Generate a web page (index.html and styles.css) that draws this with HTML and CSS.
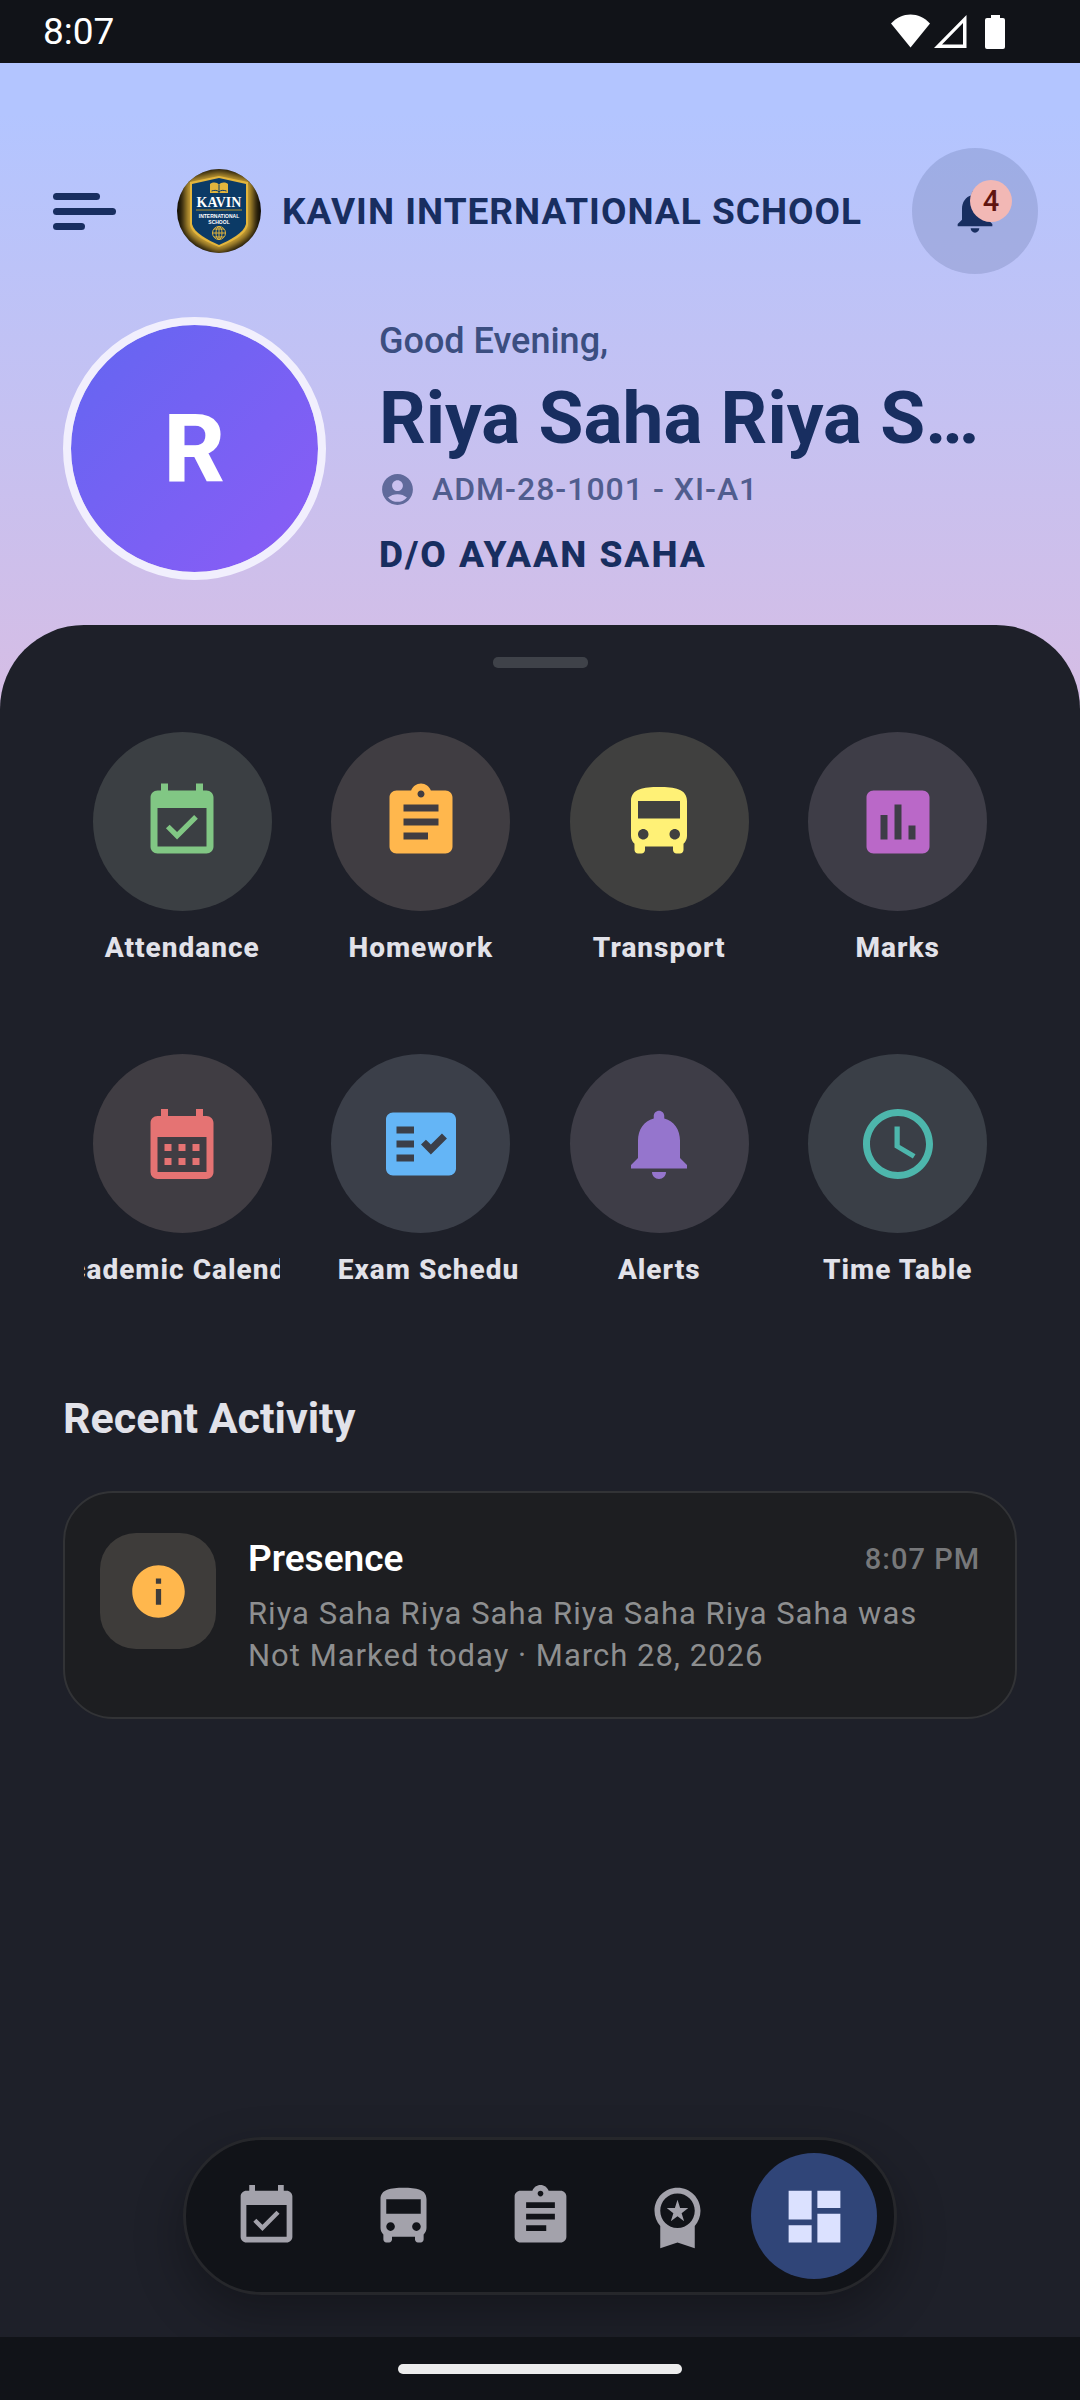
FILE: index.html
```html
<!DOCTYPE html>
<html lang="en">
<head>
    <meta charset="UTF-8">
    <meta name="viewport" content="width=device-width, initial-scale=1.0">
    <title>Kavin International School</title>
    <link rel="stylesheet" href="styles.css">
</head>
<body>

    <!-- shared icon shapes -->
    <svg class="icon-defs" aria-hidden="true">
        <symbol id="i-attendance" viewBox="0 0 24 24"><path d="M16.53 11.06L15.47 10l-4.88 4.88-2.12-2.12-1.06 1.06L10.59 17l5.94-5.94zM19 3h-1V1h-2v2H8V1H6v2H5c-1.11 0-1.99.9-1.99 2L3 19c0 1.1.89 2 2 2h14c1.1 0 2-.9 2-2V5c0-1.1-.9-2-2-2zm0 16H5V8h14v11z"/></symbol>
        <symbol id="i-homework" viewBox="0 0 24 24"><path d="M19 3h-4.18C14.4 1.84 13.3 1 12 1c-1.3 0-2.4.84-2.82 2H5c-1.1 0-2 .9-2 2v14c0 1.1.9 2 2 2h14c1.1 0 2-.9 2-2V5c0-1.1-.9-2-2-2zm-7 0c.55 0 1 .45 1 1s-.45 1-1 1-1-.45-1-1 .45-1 1-1zm2 14H7v-2h7v2zm3-4H7v-2h10v2zm0-4H7V7h10v2z"/></symbol>
        <symbol id="i-bus" viewBox="0 0 24 24"><path d="M4 16c0 .88.39 1.67 1 2.22V20c0 .55.45 1 1 1h1c.55 0 1-.45 1-1v-1h8v1c0 .55.45 1 1 1h1c.55 0 1-.45 1-1v-1.78c.61-.55 1-1.34 1-2.22V6c0-3.5-3.58-4-8-4s-8 .5-8 4v10zm3.5 1c-.83 0-1.5-.67-1.5-1.5S6.67 14 7.5 14s1.5.67 1.5 1.5S8.33 17 7.5 17zm9 0c-.83 0-1.5-.67-1.5-1.5s.67-1.5 1.5-1.5 1.5.67 1.5 1.5-.67 1.5-1.5 1.5zm1.5-6H6V6h12v5z"/></symbol>
        <symbol id="i-marks" viewBox="0 0 24 24"><path d="M19 3H5c-1.1 0-2 .9-2 2v14c0 1.1.9 2 2 2h14c1.1 0 2-.9 2-2V5c0-1.1-.9-2-2-2zM9 17H7v-7h2v7zm4 0h-2V7h2v10zm4 0h-2v-4h2v4z"/></symbol>
        <symbol id="i-calendar" viewBox="0 0 24 24"><path d="M19 4h-1V2h-2v2H8V2H6v2H5c-1.11 0-1.99.9-1.99 2L3 20a2 2 0 0 0 2 2h14c1.1 0 2-.9 2-2V6c0-1.1-.9-2-2-2zm0 16H5V10h14v10zM9 14H7v-2h2v2zm4 0h-2v-2h2v2zm4 0h-2v-2h2v2zm-8 4H7v-2h2v2zm4 0h-2v-2h2v2zm4 0h-2v-2h2v2z"/></symbol>
        <symbol id="i-exam" viewBox="0 0 24 24"><path d="M20 3H4c-1.1 0-2 .9-2 2v14c0 1.1.9 2 2 2h16c1.1 0 2-.9 2-2V5c0-1.1-.9-2-2-2zM10 17H5v-2h5v2zm0-4H5v-2h5v2zm0-4H5V7h5v2zm4.82 6L12 12.16l1.41-1.41 1.41 1.42L17.99 9l1.42 1.42L14.82 15z"/></symbol>
        <symbol id="i-bell" viewBox="0 0 24 24"><path d="M12 22c1.1 0 2-.9 2-2h-4c0 1.1.89 2 2 2zm6-6v-5c0-3.07-1.64-5.64-4.5-6.32V4c0-.83-.67-1.5-1.5-1.5s-1.5.67-1.5 1.5v.68C7.63 5.36 6 7.92 6 11v5l-2 2v1h16v-1l-2-2z"/></symbol>
        <symbol id="i-clock" viewBox="0 0 24 24"><path d="M11.99 2C6.47 2 2 6.48 2 12s4.47 10 9.99 10C17.52 22 22 17.52 22 12S17.52 2 11.99 2zM12 20c-4.42 0-8-3.58-8-8s3.58-8 8-8 8 3.58 8 8-3.58 8-8 8zm.5-13H11v6l5.25 3.15.75-1.23-4.5-2.67z"/></symbol>
        <symbol id="i-award" viewBox="0 0 24 24"><path d="M9.68 13.69L12 11.93l2.31 1.76-.88-2.85L15.75 9h-2.84L12 6.19 11.09 9H8.25l2.31 1.84-.88 2.85zM20 10c0-4.42-3.58-8-8-8s-8 3.58-8 8c0 2.03.76 3.87 2 5.28V23l6-2 6 2v-7.72c1.24-1.41 2-3.25 2-5.28zm-8-6c3.31 0 6 2.69 6 6s-2.69 6-6 6-6-2.69-6-6 2.69-6 6-6z"/></symbol>
        <symbol id="i-dashboard" viewBox="0 0 24 24"><path d="M3 13h8V3H3v10zm0 8h8v-6H3v6zm10 0h8V11h-8v10zm0-18v6h8V3h-8z"/></symbol>
        <symbol id="i-info" viewBox="0 0 24 24"><path d="M12 2C6.48 2 2 6.48 2 12s4.48 10 10 10 10-4.48 10-10S17.52 2 12 2zm1 15h-2v-6h2v6zm0-8h-2V7h2v2z"/></symbol>
        <symbol id="i-account" viewBox="0 0 24 24"><path d="M12 2C6.48 2 2 6.48 2 12s4.48 10 10 10 10-4.48 10-10S17.52 2 12 2zm0 4c1.93 0 3.5 1.57 3.5 3.5S13.93 13 12 13s-3.5-1.57-3.5-3.5S10.07 6 12 6zm0 14c-2.03 0-4.43-.82-6.14-2.88C7.55 15.8 9.68 15 12 15s4.45.8 6.14 2.12C16.43 19.18 14.03 20 12 20z"/></symbol>
    </svg>

    <div class="status-bar">
        <span class="status-time">8:07</span>
        <svg class="status-icons" width="116" height="36" viewBox="0 0 116 36" aria-hidden="true">
            <path d="M0 9.5C11-2.5 28-2.5 39 9.5L19.5 33.5z"/>
            <path d="M43 34L75.5 1V34zM51 30.5H72V9z" fill-rule="evenodd"/>
            <path d="M100 1h9v3h3a2 2 0 0 1 2 2v27a2 2 0 0 1-2 2H96a2 2 0 0 1-2-2V6a2 2 0 0 1 2-2h4z"/>
        </svg>
    </div>

    <div class="screen">
        <header class="topbar">
            <button class="menu-btn" aria-label="Menu">
                <span class="menu-line menu-line-mid"></span>
                <span class="menu-line"></span>
                <span class="menu-line menu-line-short"></span>
            </button>
            <div class="brand">
                <svg class="logo" viewBox="0 0 84 84" aria-hidden="true">
                    <defs>
                        <clipPath id="logoClip"><circle cx="42" cy="42" r="42"/></clipPath>
                        <filter id="glow" x="-30%" y="-30%" width="160%" height="160%"><feGaussianBlur stdDeviation="4"/></filter>
                    </defs>
                    <g clip-path="url(#logoClip)">
                        <rect width="84" height="84" fill="#0d0a04"/>
                        <path d="M42 3L76 10V58C74 70 58 77 42 83C26 77 10 70 8 58V10z" fill="#d3a838" filter="url(#glow)"/>
                        <path d="M42 7L71 13V56C69 66 54 73 42 78C30 73 15 66 13 56V13z" fill="#e3b53c"/>
                        <path d="M42 9L69 15V55C67 64 53 71 42 76C31 71 17 64 15 55V15z" fill="#0b3a66"/>
                        <path d="M33 15c3-2 7-2 9 1 2-3 6-3 9-1v9H33z" fill="#e3b53c"/>
                        <path d="M42 16v8M34.5 22c3-1 6-1 7.5 1 1.5-2 4.5-2 7.5-1" stroke="#0b3a66" fill="none"/>
                        <text x="42" y="38" class="logo-name">KAVIN</text>
                        <path d="M19 41h46" stroke="#b8932f"/>
                        <text x="42" y="49" class="logo-sub">INTERNATIONAL</text>
                        <text x="42" y="55" class="logo-sub">SCHOOL</text>
                        <g fill="none" stroke="#e3b53c">
                            <circle cx="42" cy="64" r="6.5"/>
                            <ellipse cx="42" cy="64" rx="3" ry="6.5"/>
                            <path d="M42 57.5v13M35.5 64h13M37 60h10M37 68h10"/>
                        </g>
                    </g>
                </svg>
                <span class="school-name">KAVIN INTERNATIONAL SCHOOL</span>
            </div>
            <button class="bell-btn" aria-label="Notifications">
                <svg class="bell-icon"><use href="#i-bell"/></svg>
                <span class="badge">4</span>
            </button>
        </header>

        <section class="profile">
            <div class="avatar">R</div>
            <div class="profile-info">
                <p class="greeting">Good Evening,</p>
                <h1 class="student-name">Riya Saha Riya Saha Riya Saha Riya Saha</h1>
                <p class="admission"><svg class="account-icon"><use href="#i-account"/></svg>ADM-28-1001 - XI-A1</p>
                <p class="parent">D/O AYAAN SAHA</p>
            </div>
        </section>

        <main class="sheet">
            <div class="handle"></div>

            <nav class="shortcuts">
                <a href="#" class="shortcut green"><span class="circle"><svg><use href="#i-attendance"/></svg></span><span class="label">Attendance</span></a>
                <a href="#" class="shortcut orange"><span class="circle"><svg><use href="#i-homework"/></svg></span><span class="label">Homework</span></a>
                <a href="#" class="shortcut yellow"><span class="circle"><svg><use href="#i-bus"/></svg></span><span class="label">Transport</span></a>
                <a href="#" class="shortcut pink"><span class="circle"><svg><use href="#i-marks"/></svg></span><span class="label">Marks</span></a>
                <a href="#" class="shortcut red"><span class="circle"><svg><use href="#i-calendar"/></svg></span><span class="label">Academic Calendar</span></a>
                <a href="#" class="shortcut blue"><span class="circle"><svg><use href="#i-exam"/></svg></span><span class="label label-start">Exam Schedule</span></a>
                <a href="#" class="shortcut purple"><span class="circle"><svg><use href="#i-bell"/></svg></span><span class="label">Alerts</span></a>
                <a href="#" class="shortcut teal"><span class="circle"><svg><use href="#i-clock"/></svg></span><span class="label">Time Table</span></a>
            </nav>

            <h2 class="section-title">Recent Activity</h2>

            <article class="activity-card">
                <div class="activity-icon"><svg><use href="#i-info"/></svg></div>
                <div class="activity-body">
                    <div class="activity-head">
                        <h3>Presence</h3>
                        <time>8:07 PM</time>
                    </div>
                    <p>Riya Saha Riya Saha Riya Saha Riya Saha was Not Marked today · March 28, 2026</p>
                </div>
            </article>

            <nav class="bottom-nav">
                <a href="#" class="nav-item" aria-label="Attendance"><svg><use href="#i-attendance"/></svg></a>
                <a href="#" class="nav-item" aria-label="Transport"><svg><use href="#i-bus"/></svg></a>
                <a href="#" class="nav-item" aria-label="Homework"><svg><use href="#i-homework"/></svg></a>
                <a href="#" class="nav-item" aria-label="Results"><svg><use href="#i-award"/></svg></a>
                <a href="#" class="nav-item active" aria-label="Dashboard"><svg><use href="#i-dashboard"/></svg></a>
            </nav>
        </main>
    </div>

    <div class="gesture-bar"><span class="gesture-pill"></span></div>

</body>
</html>
```
FILE: styles.css
```css
* {
    box-sizing: border-box;
}

body {
    background-color: #111318;
    font-family: Roboto, "Liberation Sans", sans-serif;
    color: #e2e2e9;
    margin: 0;
    min-height: 100vh;
    display: flex;
    flex-direction: column;
}

h1, h2, h3, p {
    margin: 0;
}

button {
    border: none;
    padding: 0;
    font-family: inherit;
    cursor: pointer;
}

a {
    text-decoration: none;
    color: inherit;
}

svg {
    fill: currentColor;
    flex-shrink: 0;
}

.icon-defs {
    display: none;
}

/* status bar */
.status-bar {
    height: 63px;
    padding: 0 73px 0 43px;
    display: flex;
    justify-content: space-between;
    align-items: center;
    color: white;
}

.status-time {
    font-size: 37px;
}

/* header */
.screen {
    flex: 1;
    display: flex;
    flex-direction: column;
    background: linear-gradient(#b3c5ff 50px, #e0bbdd 810px);
    color: #182e60;
}

.topbar {
    display: flex;
    align-items: center;
    gap: 61px;
    padding: 85px 42px 0 53px;
}

.menu-btn {
    background: none;
    width: 63px;
    display: flex;
    flex-direction: column;
    gap: 8px;
}

.menu-line {
    width: 100%;
    height: 7px;
    border-radius: 4px;
    background-color: #182e60;
}

.menu-line-mid {
    width: 75%;
}

.menu-line-short {
    width: 50%;
}

.brand {
    flex: 1;
    display: flex;
    align-items: center;
    gap: 21px;
    min-width: 0;
}

.logo {
    width: 84px;
    height: 84px;
}

.logo-name {
    font: bold 14px "Liberation Serif", serif;
    fill: white;
    text-anchor: middle;
}

.logo-sub {
    font: bold 5px "Liberation Sans", sans-serif;
    fill: white;
    text-anchor: middle;
}

.school-name {
    font-size: 37px;
    font-weight: 700;
    letter-spacing: 1px;
    white-space: nowrap;
}

.bell-btn {
    position: relative;
    width: 126px;
    height: 126px;
    border-radius: 50%;
    background-color: rgba(24, 46, 96, 0.15);
    color: #182e60;
    display: flex;
    align-items: center;
    justify-content: center;
    flex-shrink: 0;
    margin-left: -20px;
}

.bell-icon {
    width: 52px;
    height: 52px;
}

.badge {
    position: absolute;
    top: 32px;
    right: 26px;
    width: 42px;
    height: 42px;
    border-radius: 50%;
    background-color: #f2b8b5;
    color: #601410;
    font-size: 29px;
    font-weight: 500;
    line-height: 42px;
    text-align: center;
}

/* profile */
.profile {
    display: flex;
    align-items: center;
    gap: 53px;
    padding: 41px 84px 44px 63px;
}

.avatar {
    width: 263px;
    height: 263px;
    border: 8px solid #f1effd;
    border-radius: 50%;
    background: linear-gradient(135deg, #6366f1, #8b5cf6) padding-box;
    color: white;
    font-size: 95px;
    font-weight: 800;
    display: flex;
    align-items: center;
    justify-content: center;
    flex-shrink: 0;
}

.profile-info {
    flex: 1;
    min-width: 0;
}

.greeting {
    font-size: 36px;
    font-weight: 500;
    line-height: 52px;
    color: #3b4e80;
}

.student-name {
    font-size: 73px;
    font-weight: 700;
    line-height: 94px;
    margin: 4px 0 3px;
    white-space: nowrap;
    overflow: hidden;
    text-overflow: ellipsis;
}

.admission {
    display: flex;
    align-items: center;
    gap: 16px;
    font-size: 32px;
    font-weight: 500;
    line-height: 42px;
    letter-spacing: 1px;
    color: #505d8e;
}

.account-icon {
    width: 37px;
    height: 37px;
    color: #606a9b;
}

.parent {
    font-size: 37px;
    font-weight: 800;
    line-height: 52px;
    letter-spacing: 2px;
    margin-top: 19px;
}

/* sheet */
.sheet {
    flex: 1;
    display: flex;
    flex-direction: column;
    padding: 32px 63px 42px;
    border-radius: 84px 84px 0 0;
    background-color: #1e2029;
    color: #e2e2e9;
}

.handle {
    width: 95px;
    height: 11px;
    border-radius: 5px;
    background-color: #3f4249;
    align-self: center;
}

.shortcuts {
    display: grid;
    grid-template-columns: repeat(4, 1fr);
    row-gap: 85px;
    margin-top: 64px;
}

.shortcut {
    display: flex;
    flex-direction: column;
    align-items: center;
    gap: 16px;
    min-width: 0;
}

.circle {
    width: 179px;
    height: 179px;
    border-radius: 50%;
    display: flex;
    align-items: center;
    justify-content: center;
}

.circle svg {
    width: 84px;
    height: 84px;
}

.green .circle { background-color: #3b3f43; color: #81c784; }
.orange .circle { background-color: #403d42; color: #ffb74d; }
.yellow .circle { background-color: #40403f; color: #fff176; }
.pink .circle { background-color: #3e3d47; color: #ba68c8; }
.red .circle { background-color: #403d43; color: #e57373; }
.blue .circle { background-color: #3b3f49; color: #64b5f6; }
.purple .circle { background-color: #3e3d47; color: #9575cd; }
.teal .circle { background-color: #3a3f47; color: #4db6ac; }

/* long names run past the label box and are cut */
.label {
    width: 196px;
    display: flex;
    justify-content: center;
    font-size: 28px;
    font-weight: 800;
    line-height: 42px;
    letter-spacing: 1px;
    white-space: nowrap;
    overflow: hidden;
}

.label-start {
    justify-content: flex-start;
    padding-left: 15px;
}

.section-title {
    font-size: 43px;
    font-weight: 700;
    line-height: 56px;
    margin: 99px 0 45px;
}

/* activity */
.activity-card {
    display: flex;
    align-items: flex-start;
    gap: 32px;
    padding: 40px 35px;
    border: 2px solid #323336;
    border-radius: 50px;
    background-color: #1d1e21;
}

.activity-icon {
    width: 116px;
    height: 116px;
    border-radius: 36px;
    background-color: #3e3c3a;
    color: #ffb74d;
    display: flex;
    align-items: center;
    justify-content: center;
    flex-shrink: 0;
}

.activity-icon svg {
    width: 63px;
    height: 63px;
}

.activity-body {
    flex: 1;
}

.activity-head {
    display: flex;
    justify-content: space-between;
    align-items: center;
    margin-bottom: 8px;
}

.activity-head h3 {
    font-size: 37px;
    font-weight: 600;
    line-height: 52px;
    color: white;
}

.activity-head time {
    font-size: 29px;
    font-weight: 500;
    letter-spacing: 1px;
    color: #77787a;
}

.activity-body p {
    font-size: 31px;
    line-height: 42px;
    letter-spacing: 1px;
    color: #8e8f90;
    padding-right: 21px;
}

/* bottom nav */
.bottom-nav {
    display: flex;
    gap: 11px;
    align-self: center;
    margin-top: auto;
    padding: 13px 17px;
    border: 3px solid #26272b;
    border-radius: 79px;
    background-color: #111318;
    box-shadow: 0 20px 50px rgba(0, 0, 0, 0.3);
    color: #a3a2ab;
}

.nav-item {
    width: 126px;
    height: 126px;
    border-radius: 50%;
    display: flex;
    align-items: center;
    justify-content: center;
}

.nav-item svg {
    width: 69px;
    height: 69px;
}

.nav-item.active {
    background-color: #304578;
    color: #dbe1ff;
}

.gesture-bar {
    position: relative;
    height: 63px;
    background-color: #111318;
    display: flex;
    align-items: center;
    justify-content: center;
}

.gesture-pill {
    width: 284px;
    height: 10px;
    border-radius: 5px;
    background-color: #ececec;
}
```
